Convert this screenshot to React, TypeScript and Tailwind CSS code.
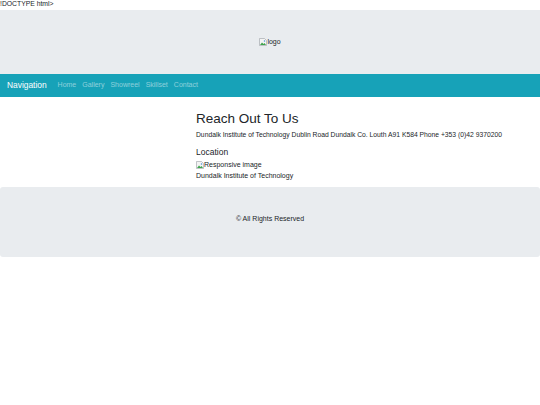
import React from "react";

function BrokenImage() {
  return (
    <svg width="8" height="8" viewBox="0 0 16 16" className="inline-block align-[-1px]">
      <path d="M1 1h10l4 4v10H1z" fill="#f4f4f4" stroke="#9aa0a6" strokeWidth="1.2" />
      <path d="M2 14l4-5 3 3 2-2 3 4z" fill="#3fa34d" />
      <circle cx="11" cy="6" r="1.5" fill="#4a90d9" />
    </svg>
  );
}

export default function App() {
  return (
    <div className="min-h-[405px] bg-white text-[#212529] font-['Liberation_Sans',Arial,sans-serif]">
      <p className="h-[10px] text-[6.8px] leading-[8px]">!DOCTYPE html&gt;</p>

      {/* Header */}
      <header className="h-[64px] bg-[#e9ecef] flex items-center justify-center">
        <span className="text-[7px] leading-[8px] flex items-center">
          <BrokenImage />
          logo
        </span>
      </header>

      {/* Navbar */}
      <nav className="h-[23px] bg-[#17a2b8] flex items-center px-[7px]">
        <span className="text-white text-[8.4px] mr-[11px]">Navigation</span>
        <ul className="flex gap-[6px] text-[7px] text-white/50">
          <li>Home</li>
          <li>Gallery</li>
          <li>Showreel</li>
          <li>Skillset</li>
          <li>Contact</li>
        </ul>
      </nav>

      {/* Contact */}
      <section className="pl-[196px] pt-[12px] pb-[6px]">
        <h2 className="text-[13.5px] leading-[19px] mb-[2px]">Reach Out To Us</h2>
        <p className="text-[6.75px] leading-[10px] mb-[6px]">
          Dundalk Institute of Technology Dublin Road Dundalk Co. Louth A91 K584 Phone +353 (0)42 9370200
        </p>
        <h5 className="text-[8.5px] leading-[12px] mb-[2px]">Location</h5>
        <p className="text-[7px] leading-[10px] flex items-center">
          <BrokenImage />
          Responsive image
        </p>
        <p className="text-[7px] leading-[11px]">Dundalk Institute of Technology</p>
      </section>

      {/* Footer */}
      <footer className="h-[70px] bg-[#e9ecef] rounded-[3px] flex items-center justify-center pb-[6px]">
        <p className="text-[7px]">© All Rights Reserved</p>
      </footer>
    </div>
  );
}
